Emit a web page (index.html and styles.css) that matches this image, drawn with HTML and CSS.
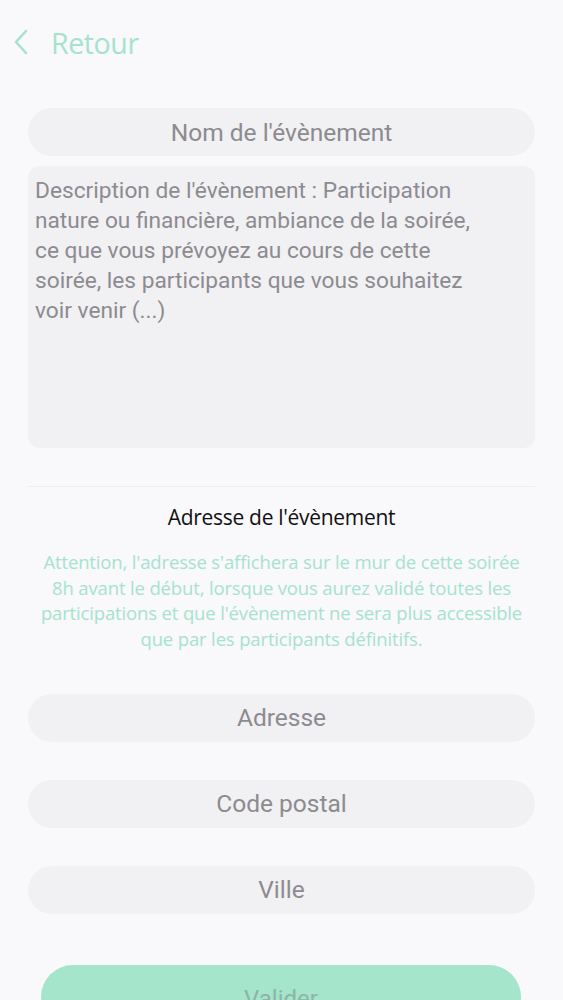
FILE: index.html
```html
<!DOCTYPE html>
<html lang="fr">
<head>
<meta charset="utf-8">
<title>Nouvel évènement</title>
<link rel="stylesheet" href="styles.css">
</head>
<body>
<header class="topbar">
  <svg class="back-icon" width="16" height="26" viewBox="0 0 16 26"><path d="M13 2 L3 13 L13 24" fill="none" stroke="#a6e3cd" stroke-width="2.6" stroke-linecap="round" stroke-linejoin="round"/></svg>
  <span class="back-label">Retour</span>
</header>
<main class="form">
  <div class="field pill">Nom de l'évènement</div>
  <div class="field area">Description de l'évènement : Participation nature ou financière, ambiance de la soirée, ce que vous prévoyez au cours de cette soirée, les participants que vous souhaitez voir venir (...)</div>
  <hr class="divider">
  <h2 class="section-title">Adresse de l'évènement</h2>
  <p class="notice">Attention, l'adresse s'affichera sur le mur de cette soirée<br>8h avant le début, lorsque vous aurez validé toutes les<br>participations et que l'évènement ne sera plus accessible<br>que par les participants définitifs.</p>
  <div class="fields">
    <div class="field pill">Adresse</div>
    <div class="field pill">Code postal</div>
    <div class="field pill">Ville</div>
  </div>
  <button class="submit">Valider</button>
</main>
</body>
</html>
```
FILE: styles.css
```css
html, body {
  margin: 0;
  padding: 0;
  background: #f9f8fb;
  height: 1000px;
  overflow: hidden;
}
.topbar {
  display: flex;
  align-items: center;
  height: 86px;
  padding-left: 13px;
  box-sizing: border-box;
}
.back-icon {
  display: block;
  margin-top: -2px;
}
.back-label {
  margin-left: 22px;
  font-family: "Open Sans", "Noto Sans", sans-serif;
  font-size: 28.5px;
  color: #a6e3cd;
  letter-spacing: -0.4px;
}
.form {
  padding: 22px 28px 0;
  display: flex;
  flex-direction: column;
}
.field {
  background: #f1f0f3;
  font-family: Roboto, "Liberation Sans", sans-serif;
  font-size: 24.5px;
  color: #8c8b90;
  box-sizing: border-box;
}
.pill {
  height: 48px;
  border-radius: 24px;
  display: flex;
  align-items: center;
  justify-content: center;
}
.area {
  margin-top: 10px;
  height: 282px;
  border-radius: 12px;
  padding: 10px 50px 10px 7px;
  line-height: 30px;
  font-size: 22.7px;
}
.divider {
  margin: 38px 0 0;
  border: 0;
  border-top: 1px solid #eeedf0;
  height: 0;
}
.section-title {
  margin: 16px 0 0;
  font-family: "Open Sans", "Noto Sans", sans-serif;
  font-weight: normal;
  font-size: 21px;
  line-height: 28px;
  color: #111;
  text-align: center;
  letter-spacing: -0.3px;
}
.notice {
  margin: 18px 0 0;
  font-family: "Open Sans", "Noto Sans", sans-serif;
  font-size: 18.5px;
  line-height: 25.7px;
  color: #a6e3cd;
  text-align: center;
  letter-spacing: -0.15px;
}
.fields {
  margin-top: 42px;
  display: flex;
  flex-direction: column;
  gap: 38px;
}
.submit {
  margin: 51px 14px 0 13px;
  height: 64px;
  border: 0;
  border-radius: 32px;
  background: #a4e5cc;
  font-family: Roboto, "Liberation Sans", sans-serif;
  font-size: 24px;
  color: #8fb3a6;
  padding-top: 6px;
}
```
